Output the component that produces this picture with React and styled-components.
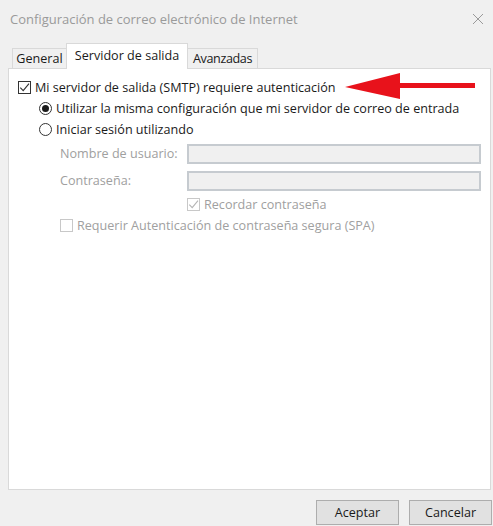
import React from 'react'
import styled, { createGlobalStyle } from 'styled-components'

const Global = createGlobalStyle`
  html, body {
    margin: 0;
    padding: 0;
    background: #f0f0f0;
  }
  body {
    font-family: "Open Sans", "Noto Sans", sans-serif;
    font-size: 12.6px;
    color: #1a1a1a;
  }
`

const Dialog = styled.div`
  width: 493px;
  height: 526px;
  background: #f0f0f0;
  display: flex;
  flex-direction: column;
  box-sizing: border-box;
`

const TitleBar = styled.div`
  height: 38px;
  display: flex;
  align-items: center;
  justify-content: space-between;
  padding: 0 7px 0 10px;
  color: #9a9a9a;
  font-size: 13px;
`

const Close = styled.div`
  width: 16px;
  height: 16px;
  display: flex;
  align-items: center;
  justify-content: center;
`

const Body = styled.div`
  display: flex;
  flex-direction: column;
  padding: 0 0 0 8px;
`

const Tabs = styled.div`
  display: flex;
  align-items: flex-end;
  height: 30px;
  padding-left: 4px;
`

const Tab = styled.div`
  width: ${p => p.$w}px;
  height: ${p => (p.$active ? '26px' : '20px')};
  display: flex;
  justify-content: center;
  align-items: ${p => (p.$active ? 'flex-start' : 'center')};
  padding-top: ${p => (p.$active ? '3px' : '0')};
  box-sizing: border-box;
  background: ${p => (p.$active ? '#fff' : '#f0f0f0')};
  border: 1px solid #d9d9d9;
  border-bottom: none;
  margin-left: ${p => (p.$first ? '0' : '-1px')};
  margin-bottom: ${p => (p.$active ? '-1px' : '0')};
  position: relative;
  z-index: ${p => (p.$active ? 2 : 1)};
  color: #1a1a1a;
  white-space: nowrap;
  letter-spacing: ${p => p.$ls || 0}px;
`

const Panel = styled.div`
  height: 422px;
  margin-right: 2px;
  background: #fff;
  border: 1px solid #d9d9d9;
  box-sizing: border-box;
  padding: 8px 9px 0 9px;
  display: flex;
  flex-direction: column;
  position: relative;
`

const Row = styled.label`
  display: flex;
  align-items: center;
  height: 21px;
  padding-left: ${p => p.$indent || 0}px;
  gap: 4px;
  color: ${p => (p.$disabled ? '#a0a0a0' : '#1a1a1a')};
  white-space: nowrap;
`

const Box = styled.span`
  width: 13px;
  height: 13px;
  box-sizing: border-box;
  border: 1px solid ${p => (p.$disabled ? '#c8c8c8' : '#333')};
  background: #fff;
  display: flex;
  align-items: center;
  justify-content: center;
  flex: none;
`

const Radio = styled.span`
  width: 13px;
  height: 13px;
  box-sizing: border-box;
  border-radius: 50%;
  border: 1px solid #333;
  background: #fff;
  display: flex;
  align-items: center;
  justify-content: center;
  flex: none;
  &::after {
    content: '';
    width: 7px;
    height: 7px;
    border-radius: 50%;
    background: ${p => (p.$checked ? '#1a1a1a' : 'transparent')};
  }
`

const FieldRow = styled.div`
  display: grid;
  grid-template-columns: 127px 1fr;
  align-items: center;
  height: 27px;
  padding-left: 42px;
  color: #a0a0a0;
`

const Input = styled.div`
  height: 20px;
  box-sizing: border-box;
  border: 2px solid #c6cbd0;
  background: #f0f0f0;
`

const Arrow = styled.svg`
  position: absolute;
  left: 336px;
  top: 4px;
`

const Footer = styled.div`
  display: flex;
  justify-content: flex-end;
  gap: 10px;
  padding: 10px 1px 0 0;
`

const Button = styled.button`
  width: 83px;
  height: 25px;
  background: #e1e1e1;
  border: 1px solid #adadad;
  font-family: inherit;
  font-size: 12.6px;
  color: #1a1a1a;
  padding: 0;
`

const Check = ({ color = '#333' }) => (
  <svg width="11" height="11" viewBox="0 0 11 11">
    <path d="M1.3 5.6 L4.2 8.6 L10 1.6" fill="none" stroke={color} strokeWidth="1.1" />
  </svg>
)

export default function App() {
  return (
    <Dialog>
      <Global />
      <TitleBar>
        <span>Configuración de correo electrónico de Internet</span>
        <Close>
          <svg width="12" height="12" viewBox="0 0 12 12">
            <path d="M1 1 L11 11 M11 1 L1 11" stroke="#9a9a9a" strokeWidth="1" />
          </svg>
        </Close>
      </TitleBar>
      <Body>
        <Tabs>
          <Tab $first $w={55}>General</Tab>
          <Tab $active $w={122}>Servidor de salida</Tab>
          <Tab $w={71} $ls={-0.4}>Avanzadas</Tab>
        </Tabs>
        <Panel>
          <Row>
            <Box><Check /></Box>
            Mi servidor de salida (SMTP) requiere autenticación
          </Row>
          <Row $indent={21}>
            <Radio $checked />
            Utilizar la misma configuración que mi servidor de correo de entrada
          </Row>
          <Row $indent={21}>
            <Radio />
            Iniciar sesión utilizando
          </Row>
          <FieldRow>
            <span>Nombre de usuario:</span>
            <Input />
          </FieldRow>
          <FieldRow>
            <span>Contraseña:</span>
            <Input />
          </FieldRow>
          <Row $indent={169} $disabled>
            <Box $disabled><Check color="#b5b5b5" /></Box>
            Recordar contraseña
          </Row>
          <Row $indent={42} $disabled>
            <Box $disabled />
            Requerir Autenticación de contraseña segura (SPA)
          </Row>
          <Arrow width="132" height="27" viewBox="0 0 132 27">
            <path d="M0 14 L55 0 L55 10 L130 10 L130 15 L55 15 L55 26 Z" fill="#e8121b" />
          </Arrow>
        </Panel>
        <Footer>
          <Button>Aceptar</Button>
          <Button>Cancelar</Button>
        </Footer>
      </Body>
    </Dialog>
  )
}
